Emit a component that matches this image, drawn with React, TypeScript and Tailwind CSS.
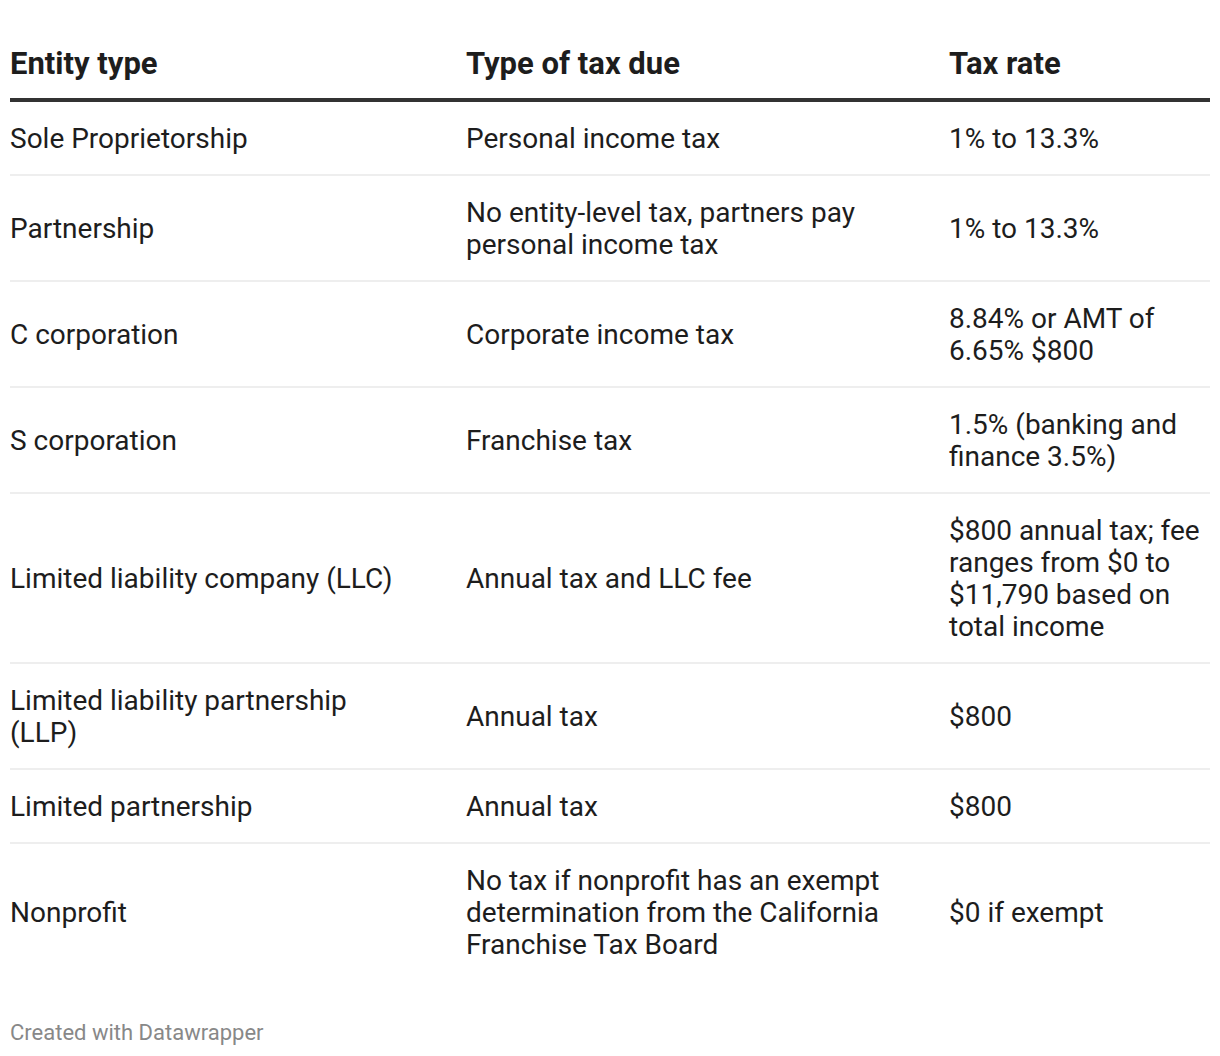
const ROWS: Array<[string, string, string]> = [
  ['Sole Proprietorship', 'Personal income tax', '1% to 13.3%'],
  ['Partnership', 'No entity-level tax, partners pay personal income tax', '1% to 13.3%'],
  ['C corporation', 'Corporate income tax', '8.84% or AMT of 6.65% $800'],
  ['S corporation', 'Franchise tax', '1.5% (banking and finance 3.5%)'],
  [
    'Limited liability company (LLC)',
    'Annual tax and LLC fee',
    '$800 annual tax; fee ranges from $0 to $11,790 based on total income'
  ],
  ['Limited liability partnership (LLP)', 'Annual tax', '$800'],
  ['Limited partnership', 'Annual tax', '$800'],
  [
    'Nonprofit',
    'No tax if nonprofit has an exempt determination from the California Franchise Tax Board',
    '$0 if exempt'
  ]
]

export default function App(): JSX.Element {
  return (
    <div className="w-[1220px] min-h-[1056px] bg-white px-[10px] font-['Roboto',sans-serif] text-[#1d1d1d]">
      <table className="w-[1200px] table-fixed border-collapse">
        <colgroup>
          <col className="w-[456px]" />
          <col className="w-[483px]" />
          <col className="w-[261px]" />
        </colgroup>
        <thead>
          <tr className="border-b-4 border-[#333333]">
            <th className="pt-[48px] pb-[18px] pr-[50px] text-left align-bottom text-[31px] leading-[32px] font-bold">
              Entity type
            </th>
            <th className="pt-[48px] pb-[18px] pr-[33px] text-left align-bottom text-[31px] leading-[32px] font-bold">
              Type of tax due
            </th>
            <th className="pt-[48px] pb-[18px] text-left align-bottom text-[31px] leading-[32px] font-bold">
              Tax rate
            </th>
          </tr>
        </thead>
        <tbody>
          {ROWS.map((r, i) => (
            <tr key={i} className={i < ROWS.length - 1 ? 'border-b-2 border-[#eeeeee]' : ''}>
              <td className="pt-[21px] pb-[19px] pr-[50px] align-middle text-[28px] leading-[32px]">{r[0]}</td>
              <td className="pt-[21px] pb-[19px] pr-[33px] align-middle text-[28px] leading-[32px]">{r[1]}</td>
              <td className="pt-[21px] pb-[19px] align-middle text-[28px] leading-[32px]">{r[2]}</td>
            </tr>
          ))}
        </tbody>
      </table>
      <div className="mt-[39px] text-[22px] leading-[28px] text-[#888888]">Created with Datawrapper</div>
    </div>
  )
}
